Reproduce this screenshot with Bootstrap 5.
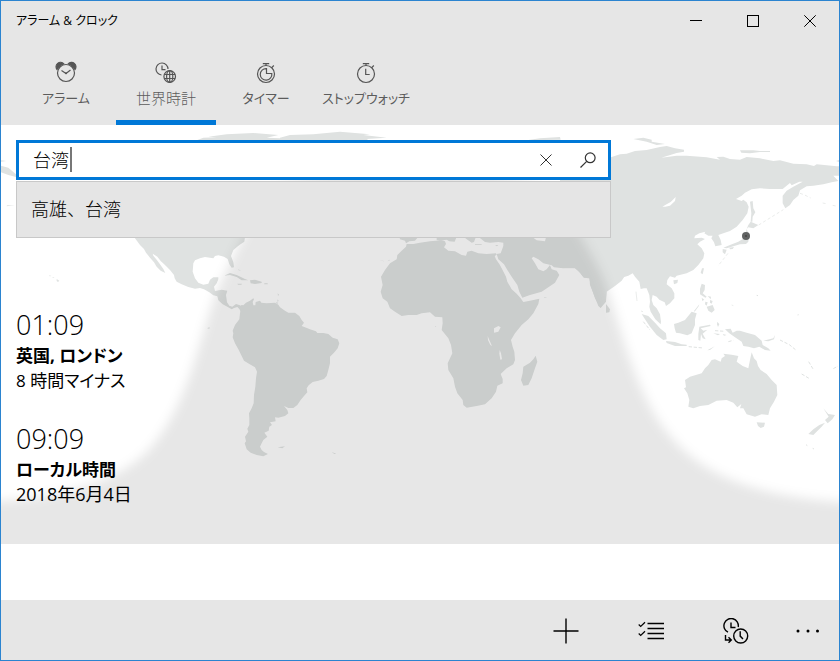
<!DOCTYPE html>
<html lang="ja">
<head>
<meta charset="utf-8">
<meta name="viewport" content="width=device-width, initial-scale=1">
<title>アラーム &amp; クロック</title>
<link href="https://cdn.jsdelivr.net/npm/bootstrap@5.3.0/dist/css/bootstrap.min.css" rel="stylesheet">
<style>
  body { font-family: "Open Sans", "Noto Sans CJK JP", sans-serif; font-feature-settings: "palt"; color: #000; }
  .app { border: 1px solid #2b84d0; background: #fff; }
  .chrome { background: #e6e6e6; }
  .titlebar { height: 40px; font-size: 12px; line-height: 40px; padding-left: 15px; padding-right: 1px; }
  .plain { background: none; border: 0; padding: 0; color: #000; display: flex; align-items: center; justify-content: center; }
  .win { width: 57px; height: 39px; }
  .tabs { padding: 0 15px; }
  .tab { width: 100px; height: 84px; color: #5c5c5c; text-decoration: none; font-size: 13px; line-height: 20px; padding-top: 19px; gap: 4px; border-bottom: 5px solid transparent; white-space: nowrap; }
  .tab.active { border-bottom-color: #0078d7; }
  .kanji { font-size: 15px; font-weight: 300; }
  .tab svg { width: 24px; height: 24px; }
  .world { isolation: isolate; padding: 15px 15px 37px; }
  .worldmap { z-index: -1; }
  .finder { max-width: 595px; margin-bottom: 69px; }
  .box { height: 40px; border: 3px solid #0078d7; background: #fff; }
  .query { border: 0; outline: 0; background: none; font-size: 18px; padding: 0 0 0 14px; min-width: 0; caret-color: transparent; font-family: inherit; font-feature-settings: inherit; font-weight: 300; }
  .text-cursor { left: 51px; top: 4px; width: 2px; height: 25px; background: #777; }
  .box .plain { width: 43px; color: #333; }
  .box .glass { padding-right: 0; width: 41px; }
  .hit { margin-top: 1px; height: 57px; border: 1px solid #c8c8c8; background: #e5e5e5; font-size: 18px; line-height: 55px; padding: 0 14px; color: #000; font-weight: 300; }
  .clock-entry { line-height: 25px; font-size: 17px; }
  .clock-entry + .clock-entry { margin-top: 28px; }
  .hour { font-size: 27px; line-height: 36px; font-weight: 300; }
  .date { font-size: 18px; }
  .commands { height: 60px; padding: 1px 1px 0 0; }
  .cmd { width: 85px; }
  .cmd-more { width: 60px; }
</style>
</head>
<body>
<div class="app d-flex flex-column min-vh-100">
  <header class="chrome">
    <div class="titlebar d-flex justify-content-between">
      <span>アラーム &amp; クロック</span>
      <div class="d-flex">
        <button class="plain win" aria-label="最小化"><svg width="12" height="12" shape-rendering="crispEdges"><path d="M0 5.500H12" stroke="#000"/></svg></button>
        <button class="plain win" aria-label="最大化"><svg width="12" height="12" shape-rendering="crispEdges"><path d="M.5.5h11v11H.5z" fill="none" stroke="#000"/></svg></button>
        <button class="plain win" aria-label="閉じる"><svg width="12" height="12"><path d="M.3.300 11.700 11.700M11.700.300.3 11.700" stroke="#000"/></svg></button>
      </div>
    </div>
    <nav class="tabs d-flex">
      <a class="tab d-flex flex-column align-items-center" href="#alarm">
        <svg viewBox="0 0 24 24" fill="none" stroke="#555" stroke-width="1.200"><circle cx="12" cy="13" r="8.500"/><path d="M7.500 10.500l4.500 3 4.500-3.500"/><circle cx="12" cy="13.300" r="1" fill="#555" stroke="none"/><path d="M3 9.500A4 4 0 0 1 9.800 4Q5 5.500 3 9.500zM21 9.500A4 4 0 0 0 14.200 4Q19 5.500 21 9.500z" fill="#555"/></svg>
        <span>アラーム</span></a>
      <a class="tab active d-flex flex-column align-items-center" href="#world" aria-current="page">
        <svg viewBox="0 0 24 24" fill="none" stroke="#555" stroke-width="1.200"><path d="M7.500 15A6 6 0 1 1 14 9M8 5.500v4.200h3.500"/><circle cx="15.700" cy="16.500" r="5.800"/><path d="M10.400 14.500h10.600M10.400 18.500h10.600M15.700 10.700v11.600"/><ellipse cx="15.700" cy="16.500" rx="3.100" ry="5.800"/></svg>
        <span class="kanji">世界時計</span></a>
      <a class="tab d-flex flex-column align-items-center" href="#timer">
        <svg viewBox="0 0 24 24" fill="none" stroke="#555" stroke-width="1.200"><circle cx="12" cy="14" r="8.500"/><path d="M8.800 3.600h6.400M12 3.600v2M17.500 7.800l2.300-2.300"/><path d="M12.500 8.600v4.900h5.300A5.800 5.800 0 1 1 12.500 8.600z"/></svg>
        <span>タイマー</span></a>
      <a class="tab d-flex flex-column align-items-center" href="#stopwatch">
        <svg viewBox="0 0 24 24" fill="none" stroke="#555" stroke-width="1.200"><circle cx="12" cy="14" r="8.500"/><path d="M8.800 3.600h6.400M12 3.600v2M17.500 7.800l2.300-2.300M11.700 8.800v5.700h4"/></svg>
        <span>ストップウォッチ</span></a>
    </nav>
  </header>

  <main class="flex-grow-1">
    <section class="world position-relative">
      <svg class="worldmap position-absolute top-0 start-0 w-100 h-100" viewBox="1 125 838 419" preserveAspectRatio="xMidYMid slice" aria-hidden="true">
        <defs><filter id="dusk" x="-10%" y="-10%" width="120%" height="120%"><feGaussianBlur stdDeviation="5.500"/></filter></defs>
        <g fill="#dfe2e1">
          <!-- North and Central America, Caribbean, Arctic islands -->
          <g transform="translate(0 125) scale(.33333)">
            <path d="M380 300L405 340 420 360 432 372 438 383 450 398 462 412 470 425 482 437 496 444 490 432 480 418 470 404 460 392 458 386 472 395 482 408 495 420 510 435 522 450 524 460 530 470 545 478 565 486 585 491 600 489 612 493 628 502 640 511 652 514 655 526 668 538 682 545 695 553 702 549 712 546 718 552 725 565 730 552 726 546 720 541 708 537 697 545 688 542 681 532 678 510 682 497 665 494 645 498 642 485 650 475 655 463 655 457 640 457 630 464 625 476 610 479 595 473 585 460 578 440 580 415 585 406 600 400 615 396 640 400 645 393 655 391 672 395 683 402 688 418 695 428 702 427 700 412 693 393 700 375 718 360 733 350 740 300z"/>
            <path d="M672 452l18-8 20 6 25 12 10 4h-20l-15-10-20-6zM750 466l15-2 20 6v4l-20 3-13-2zM712 476h14l-2 3h-10zM793 475h10v3h-10zM714 433l10 4-8-1zM170 462l8 5-4 4-4-3zM147 451l8 2-6 1zM157 456l7 2-5 1z"/>
            <path d="M3 122l22 6 23 20v8l-23-6-22-8zM3 106l16 2-16 2zM20 244l25-4-24 1z"/>
            <path d="M590 46l20-8 40-1-25-2 55-7 80-4 75 6-35 8 40 2v8z"/>
            <path d="M840 38l30-8 70-2 80-8 90 8-20 2 70 8-60 4 10 6H840zM1580 46l40-6 60-4 2 8zM622 609l6-2 2 3-6 1z"/>
          </g>
          <!-- South America -->
          <g transform="translate(210 280) scale(.33333)">
            <path d="M68 172L70 160 68 152 75 135 88 118 90 100 92 90 88 80 95 75 100 76 108 68 120 62 130 55 132 58 128 66 130 76 136 76 137 66 150 62 154 68 170 70 195 68 205 74 210 82 225 92 235 98 255 98 268 108 275 120 282 128 275 138 285 142 300 148 318 154 322 159 340 159 355 162 368 173 383 178 388 190 383 205 372 218 360 230 360 250 355 270 350 288 342 297 325 302 308 306 296 316 290 325 292 337 282 348 272 360 262 375 250 384 235 384 222 378 232 390 235 400 225 408 205 413 195 412 197 424 180 427 186 435 178 440 176 452 163 458 172 470 160 480 155 490 150 500 155 510 162 516 174 522 160 529 140 525 122 518 110 508 104 490 108 484 105 470 115 455 112 446 118 435 118 415 117 400 125 385 131 370 132 345 136 320 138 295 141 275 135 262 118 252 102 242 95 228 85 208 75 190z"/>
            <path d="M203 502l22-3-8 6zM365 516l14 5-6 1zM203 40l4 4-3 4zM202 58l4 4-3 4zM197 67l8 1-4 4zM455 23l5 2zM466 34l6-2z"/>
          </g>
          <!-- Africa, Arabia and the Mediterranean -->
          <g transform="translate(370 230) scale(.33333)">
            <path fill-rule="evenodd" d="M110 42L130 42 150 38 180 34 215 31 225 34 228 42 222 52 235 62 255 64 275 75 288 77 292 65 305 62 325 70 350 72 378 70 380 74 374 78 378 88 388 102 395 115 408 140 412 155 425 178 440 191 452 205 460 216 480 212 508 206 505 222 490 250 475 268 455 285 435 310 423 330 428 350 433 365 435 390 430 403 410 415 392 432 398 447 398 460 382 467 378 485 365 505 345 523 320 528 290 533 280 525 278 510 262 490 255 470 250 445 235 420 233 400 247 370 243 345 235 325 215 300 218 280 217 262 195 260 180 247 155 250 140 255 115 255 95 258 75 245 60 235 52 215 38 205 32 185 38 165 33 140 45 120 60 100 80 88 82 75 95 62 108 50zM372 295l13-7 7 4-7 13-13 3zM353 318l5 12 8 18-5-3-7-15zM389 360l4 10 3 18-5 1-3-18z"/>
            <path d="M497 377L502 395 495 415 485 445 475 465 460 467 453 450 458 430 460 410 480 398 490 388z"/>
            <path d="M88 20l2 8 15 4 3 8 10-6 17-2 10-12zM200 20v10l10 2 20-3 8 5 16 1 6-15zM280 20l25 18 7-2 6-16zM315 43h20v2h-20zM375 46l10-1-4 4zM28 92l18 2-8-2zM52 94l6-5 2 2zM28 62l8 1zM522 201l10 1-8 1zM535 438l5-1zM550 433l5-1zM453 372l5 2zM466 380l5 2zM195 288l4 2-3 1z"/>
            <path fill-rule="evenodd" d="M325 20L345 36 360 38 385 36 400 38 400 48 392 70 380 72 385 88 402 103 412 120 425 140 442 165 448 185 457 203 480 195 515 185 535 172 555 158 568 135 560 122 545 118 540 105 530 118 520 124 505 118 495 100 485 85 490 80 505 88 520 100 545 106 552 112 580 115 615 114 625 122 640 142 655 145 658 140 660 165 672 195 685 228 692 234 708 215 710 185 735 168 755 152 770 130 770 0 325 0zM488 22l12 9 25 3 3-12z"/>
            <path d="M708 222l12 16-2 9-10 1z"/>
          </g>
          <!-- Northern and eastern Asia -->
          <g transform="translate(560 125) scale(.33333)">
            <path fill-rule="evenodd" d="M120 110L153 97 180 88 200 86 225 78 260 75 300 66 320 63 345 70 372 74 372 80 350 84 304 98 350 92 380 92 400 94 440 97 480 104 470 96 490 95 510 102 540 104 560 96 600 100 640 108 660 106 700 116 740 118 762 123 770 118 830 124 838 124 838 152 820 152 835 168 815 172 790 178 760 182 740 184 720 196 715 212 700 225 690 240 676 250 668 235 668 212 680 197 700 185 728 170 718 170 695 181 690 174 668 192 630 192 600 190 575 193 555 203 545 212 528 222 545 228 550 224 560 232 566 245 562 265 548 285 530 305 510 318 490 325 475 330 482 345 485 360 466 364 462 352 454 340 458 332 445 332 433 325 436 320 418 325 405 332 403 340 425 338 435 342 420 350 412 358 425 370 433 385 430 400 415 420 400 435 380 445 350 452 345 458 330 454 322 465 320 478 335 490 343 505 343 520 330 535 318 543 314 532 298 524 290 515 278 510 275 525 280 540 290 550 300 568 303 590 302 598 286 583 272 560 268 545 270 530 268 510 260 490 252 490 242 492 238 470 225 455 218 445 205 452 185 458 165 475 140 495 138 520 122 548 105 520 95 490 88 460 72 458 62 445 45 430 0 428 0 100zM307 245l10-6 15-8 15-15-2 12-15 14-14 3z"/>
            <path d="M220 42l30-4 25 6 0 6 40 7-25 3-30-10zM540 76l40 0 20 2 30 0v3l-30 0-30 4-26-2zM828 108l10-3v6z"/>
            <path d="M570 230l8-2 2 22 6 12-8 13-1 15-5 0 2-25zM572 290l23 10-15 10-15-3-5 5 5-12zM560 312l7 18-2 20-7 7-18 1-20 6-20 6-10-2 20-8 25-10 13-8 8-12zM488 372l12 2-5 14-7-6zM508 368l14-2-4 6-8 1zM426 430l6 0-4 18-6-4zM340 466l14-2-2 10-10 4zM425 476l10 4-1 15-6 10 12 10-4 3-16-10 0-16zM440 545l18-5 6 15-9 8-10-6zM450 525l8 3-3 8-5-3zM436 530l7 2-3 10-5-4zM425 518l8 6-6 4zM443 513l10 2-1 8zM402 558l16-20-2 6-12 16z"/>
            <path d="M596 300l74-46M720 205l12 4 20 10M788 234l10 2M818 241l14 3M504 385l-30 38" fill="none" stroke="#dfe2e1" stroke-width="2" stroke-dasharray="9 7"/>
            <path d="M228 500l3 28M243 558l6 2M712 570l5-1M515 540l5 2" fill="none" stroke="#dfe2e1" stroke-width="2"/>
          </g>
          <!-- Indonesia, Australia and New Zealand -->
          <g transform="translate(600 280) scale(.33333)">
            <path d="M125 102L145 108 165 128 180 145 198 160 200 178 190 180 170 165 150 140 135 118zM198 183l27 3 20 7 15 1 0 4-35 0-25-9zM222 132L235 128 255 120 275 95 290 100 285 118 285 135 275 160 262 166 240 160 228 158 224 145zM298 140l32-6 2 4-30 7 8 7 12-3-14 12 9 17-9-3-5-13-2 20-6-2 0-18zM352 125l6 8-4 8-3-8zM340 160l20 2-6 4zM368 162l12 3-8 2z"/>
            <path d="M375 148L392 146 398 158 410 152 420 152 440 158 465 165 485 182 488 195 505 205 512 212 495 210 478 200 462 205 445 200 430 198 425 185 405 172 388 160zM490 182l30-7 5-10-3 13-17 6zM512 160l12 8zM322 211l22-12-14 11z"/>
            <path d="M255 300L270 290 305 280 315 265 325 255 335 240 345 238 362 245 365 235 375 228 370 221 395 224 415 228 410 245 428 258 445 265 450 240 455 217 462 235 470 243 474 258 482 270 500 282 515 300 530 315 532 345 522 365 510 385 505 405 485 403 465 410 440 403 430 385 420 385 424 372 412 382 400 368 380 360 350 362 325 375 300 378 280 385 265 380 268 360 262 340 252 325 258 322zM470 427l25 1-3 12-10 4-8-6zM670 385l15 17 20 3-8 13-14 12-8-10 11-10zM675 428l-10 12-25 25-15-3 15-14 18-13z"/>
            <path d="M540 180l28 14 22 18M605 282l22 13M700 266l14-8M626 245l15 25M266 200l44 4M130 125l20 25M618 494l4 3M638 505l4 2M470 46l4 1M345 152l30 2M385 185l15-4" fill="none" stroke="#dfe2e1" stroke-width="3" stroke-dasharray="10 5"/>
          </g>
        </g>
        <path d="M-40 503C50 500 108 489 148 451C192 402 199 332 220 284C240 242 256 207 282 185Q400 155 530 185C566 205 584 240 602 275C620 320 626 365 656 417C694 475 750 500 880 504V600H-40z" fill="#000" fill-opacity=".094" filter="url(#dusk)"/>
        <circle cx="746" cy="236" r="4" fill="#606262"/><circle cx="746" cy="236" r="1" fill="#444"/>
      </svg>

      <div class="finder">
        <div class="box d-flex position-relative">
          <input class="query flex-grow-1" type="text" value="台湾" aria-label="都市を検索">
          <span class="text-cursor position-absolute"></span>
          <button class="plain" aria-label="クリア"><svg width="12" height="12"><path d="M.5.500l11 11M11.500.500l-11 11" stroke="#333"/></svg></button>
          <button class="plain glass" aria-label="検索"><svg width="16" height="16" fill="none" stroke="#333" stroke-width="1.200"><circle cx="10.200" cy="5.800" r="4.900"/><path d="M6.700 9.300.5 15.500"/></svg></button>
        </div>
        <div class="list-group rounded-0"><button class="hit list-group-item list-group-item-action">高雄、台湾</button></div>
      </div>

      <article class="clock-entry">
        <div class="hour">01:09</div>
        <div class="fw-bold">英国, ロンドン</div>
        <div>8 時間マイナス</div>
      </article>
      <article class="clock-entry">
        <div class="hour">09:09</div>
        <div class="fw-bold">ローカル時間</div>
        <div class="date">2018年6月4日</div>
      </article>
    </section>
  </main>

  <footer class="chrome commands d-flex justify-content-end">
    <button class="plain cmd" aria-label="追加"><svg width="26" height="26"><path d="M13 .5v25M.5 13h25" stroke="#000" stroke-width="1.400"/></svg></button>
    <button class="plain cmd" aria-label="選択"><svg width="26" height="26" fill="none" stroke="#000"><path d="M9.500 5.500H26M9.500 10.500H26M9.500 15.500H26M9.500 20.500H26" stroke-width="1.400"/><path d="M.7 6.500l2 2L7 4.300M.7 15.500l2 2L7 13.300" stroke-width="1.200"/></svg></button>
    <button class="plain cmd" aria-label="時刻を比較"><svg width="26" height="26" fill="none" stroke="#000" stroke-width="1.400"><path d="M5 14.200A7.200 7.200 0 1 1 15.200 9M8 4.500v5h4.500"/><circle cx="17.700" cy="18" r="7"/><path d="M17.200 13.300v4.800l2.800 2.800M2.500 17v5h5.500M5.500 19.300l2.800 2.700-2.800 2.700"/></svg></button>
    <button class="plain cmd-more" aria-label="その他"><svg width="24" height="6"><circle cx="2" cy="3" r="1.500"/><circle cx="12" cy="3" r="1.500"/><circle cx="21.500" cy="3" r="1.500"/></svg></button>
  </footer>
</div>
<script src="https://cdn.jsdelivr.net/npm/bootstrap@5.3.0/dist/js/bootstrap.bundle.min.js"></script>
</body>
</html>
